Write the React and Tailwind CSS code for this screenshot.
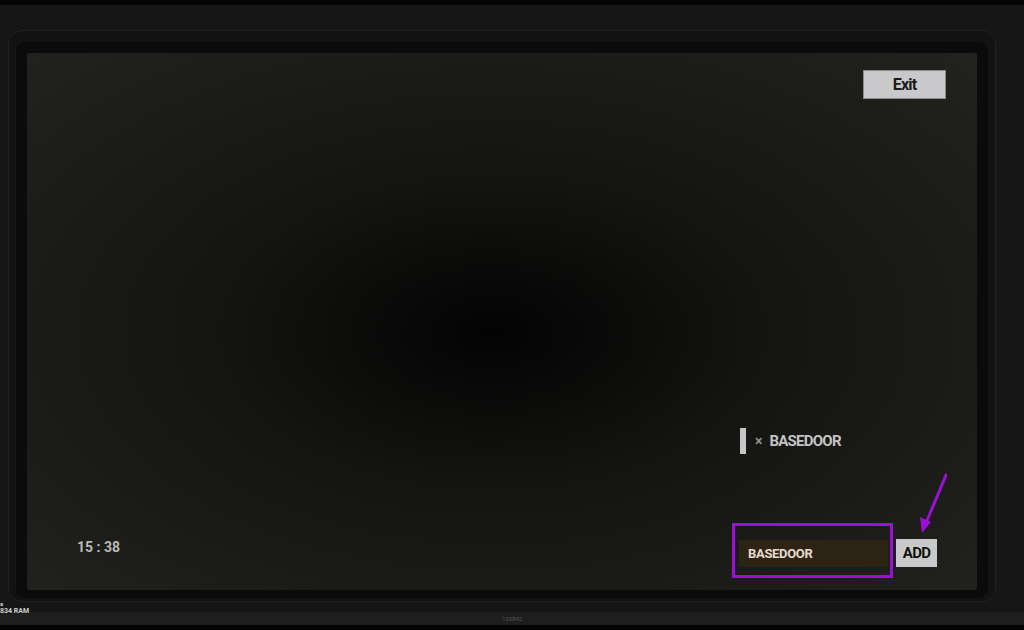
export default function App() {
  return (
    <div className="w-[1024px] h-[630px] bg-[#161616] flex flex-col overflow-hidden font-['Roboto',sans-serif]">
      <div className="h-[5px] bg-[#050505]" />
      <div className="relative h-[607px] pl-[8px] pt-[25px]">
        <div className="w-[988px] h-[572px] rounded-[14px] bg-[#121212] border border-[#222] pl-[7px] pt-[11px] pr-[7px]">
          <div className="w-[972px] h-[556px] rounded-[10px] bg-[#0b0b0b] pl-[11px] pt-[11px]">
            <div className="relative w-[950px] h-[537px] rounded-[2px] bg-[radial-gradient(ellipse_at_49%_52%,#030303_0%,#141412_40%,#22231e_100%)] flex flex-col justify-between">
              <div className="flex justify-end pt-[17px] pr-[31px]">
                <button className="w-[83px] h-[29px] bg-[#c9c9cb] border border-[#8a8a8a] text-[#1a1a1a] text-[16px] font-bold tracking-tighter">
                  Exit
                </button>
              </div>
              <div className="flex items-end justify-between pb-[12px] pr-[40px]">
                <div className="pl-[50px] pb-[20px] text-[#b9b9b9] text-[14px] font-bold">15 : 38</div>
                <div className="flex flex-col w-[205px] shrink-0">
                  <div className="flex items-center h-[26px] pl-[8px]">
                    <div className="w-[6px] h-[26px] bg-[#c6c6c6] shrink-0" />
                    <span className="ml-[9px] text-[#8f8f8f] text-[14px] font-bold">×</span>
                    <span className="ml-[7px] text-[#c4c4c4] text-[15px] font-bold tracking-tighter">BASEDOOR</span>
                  </div>
                  <div className="flex items-start mt-[69px]">
                    <div className="shrink-0 w-[161px] h-[55px] border-[3px] border-[#9b10d6] pl-[4px] pt-[14px]">
                      <div className="w-[149px] h-[27px] bg-[#2d2416] flex items-center pl-[9px] text-[#e6ddd0] text-[13px] font-bold tracking-tight">
                        BASEDOOR
                      </div>
                    </div>
                    <button className="shrink-0 ml-[3px] mt-[16px] w-[41px] h-[28px] bg-[#c9c9cb] text-[#111] text-[15px] font-bold tracking-tighter">
                      ADD
                    </button>
                  </div>
                </div>
              </div>
              <svg className="absolute left-[890px] top-[420px]" width="30" height="62" viewBox="0 0 30 62">
                <line x1="29" y1="2" x2="9" y2="50" stroke="#9b10d6" strokeWidth="3" strokeLinecap="round" />
                <polygon points="5,60 3,44 14,49" fill="#9b10d6" />
              </svg>
            </div>
          </div>
        </div>
        <div className="absolute left-0 top-[596px] text-[6px] leading-none font-bold text-[#d0d0d0]">a</div>
        <div className="absolute left-0 top-[603px] text-[7px] leading-none font-bold text-[#d0d0d0]">834 RAM</div>
      </div>
      <div className="h-[13px] bg-[#1e1e1e] flex items-center justify-center">
        <span className="text-[6px] text-[#555]">133842</span>
      </div>
      <div className="h-[5px] bg-[#050505]" />
    </div>
  );
}
